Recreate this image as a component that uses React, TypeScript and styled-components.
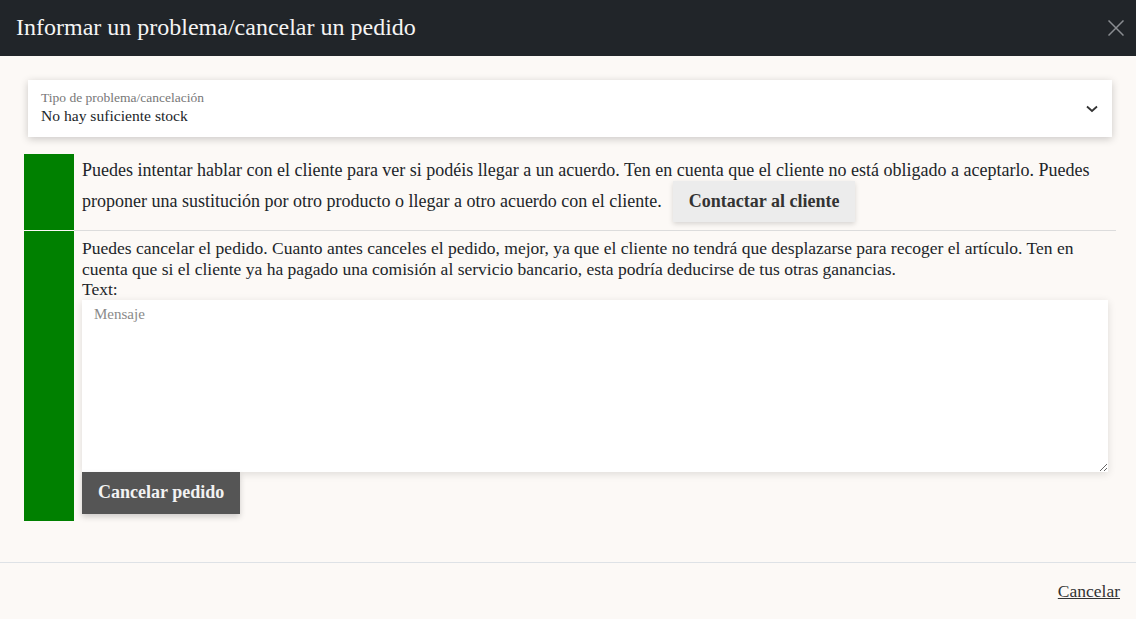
import React from "react";
import styled, { createGlobalStyle } from "styled-components";

const Global = createGlobalStyle`
  html, body { margin: 0; padding: 0; }
  body {
    font-family: "Liberation Serif", "DejaVu Serif", serif;
    background: #fcf9f6;
    color: #212529;
    width: 1136px;
    height: 619px;
    overflow: hidden;
  }
  * { box-sizing: border-box; }
`;

const Modal = styled.div`
  display: flex;
  flex-direction: column;
  height: 619px;
  background: #fcf9f6;
`;

const Header = styled.header`
  height: 56px;
  flex: none;
  background: #212529;
  display: flex;
  align-items: center;
  justify-content: space-between;
  padding: 0 8px 0 16px;
`;

const Title = styled.h1`
  margin: 0;
  font-size: 24px;
  font-weight: 400;
  color: #f4f4f4;
  line-height: 1;
  padding-bottom: 2px;
`;

const CloseButton = styled.button`
  border: 0;
  background: transparent;
  padding: 0;
  width: 24px;
  height: 24px;
  display: flex;
  align-items: center;
  justify-content: center;
  cursor: pointer;
`;

const Body = styled.main`
  flex: 1;
  padding: 24px 20px 0 24px;
`;

const SelectCard = styled.div`
  margin: 0 4px;
  height: 57px;
  background: #fff;
  box-shadow: 0 2px 8px rgba(0, 0, 0, 0.2);
  display: flex;
  align-items: center;
  justify-content: space-between;
  padding: 0 14px 0 13px;
`;

const SelectText = styled.div`
  display: flex;
  flex-direction: column;
  padding-bottom: 2px;
`;

const SelectLabel = styled.span`
  font-size: 13.5px;
  color: #777;
  line-height: 17px;
`;

const SelectValue = styled.span`
  font-size: 15.6px;
  color: #212529;
  line-height: 20px;
`;

const Options = styled.div`
  margin-top: 17px;
  display: flex;
  flex-direction: column;
`;

const OptionRow = styled.div`
  display: flex;
`;

const GreenBar = styled.div<{ $gap?: boolean }>`
  width: 50px;
  flex: none;
  background: #008000;
  margin-bottom: ${(p) => (p.$gap ? "1px" : "0")};
`;

const OptionContent = styled.div<{ $divider?: boolean; $pt: number; $pb: number; $fs: number }>`
  flex: 1;
  padding: ${(p) => p.$pt}px 8px ${(p) => p.$pb}px 8px;
  border-bottom: ${(p) => (p.$divider ? "1px solid #dcdcdc" : "none")};
  font-size: ${(p) => p.$fs}px;
`;

const Paragraph = styled.p<{ $lh: number }>`
  margin: 0;
  line-height: ${(p) => p.$lh}px;
`;

const ContactButton = styled.button`
  display: inline-block;
  vertical-align: baseline;
  margin: -4px 0 0 11px;
  height: 41px;
  padding: 0 16px;
  border: 0;
  background: #ececec;
  box-shadow: 0 2px 5px rgba(0, 0, 0, 0.15);
  font-family: inherit;
  font-weight: 700;
  font-size: 18px;
  color: #333;
`;

const Label = styled.div`
  line-height: 20.5px;
`;

const MessageArea = styled.textarea`
  display: block;
  width: 100%;
  height: 172px;
  border: 0;
  background: #fff;
  box-shadow: 0 2px 8px rgba(0, 0, 0, 0.12);
  padding: 6px 12px;
  font-family: inherit;
  font-size: 15px;
  color: #212529;
  resize: vertical;
  outline: none;
  &::placeholder { color: #8a8a8a; }
`;

const CancelOrderButton = styled.button`
  display: block;
  height: 42px;
  padding: 0 16px;
  border: 0;
  background: #555;
  color: #f2f2f2;
  font-family: inherit;
  font-weight: 700;
  font-size: 18px;
  box-shadow: 0 3px 6px rgba(0, 0, 0, 0.18);
  margin-bottom: 7px;
`;

const Footer = styled.footer`
  height: 57px;
  flex: none;
  border-top: 1px solid #dee2e6;
  display: flex;
  align-items: center;
  justify-content: flex-end;
  padding: 0 16px 0 0;
`;

const CancelLink = styled.a`
  font-size: 17.5px;
  color: #333;
  text-decoration: underline;
  cursor: pointer;
`;

export default function App() {
  return (
    <>
      <Global />
      <Modal>
        <Header>
          <Title>Informar un problema/cancelar un pedido</Title>
          <CloseButton aria-label="Cerrar">
            <svg width="16" height="16" viewBox="0 0 16 16">
              <path d="M0.5 0.5 L15.5 15.5 M15.5 0.5 L0.5 15.5" stroke="#8a8d91" strokeWidth="1.5" />
            </svg>
          </CloseButton>
        </Header>
        <Body>
          <SelectCard>
            <SelectText>
              <SelectLabel>Tipo de problema/cancelación</SelectLabel>
              <SelectValue>No hay suficiente stock</SelectValue>
            </SelectText>
            <svg width="12" height="8" viewBox="0 0 12 8">
              <path d="M1 1.5 L6 6 L11 1.5" fill="none" stroke="#333" strokeWidth="1.8" />
            </svg>
          </SelectCard>
          <Options>
            <OptionRow>
              <GreenBar $gap />
              <OptionContent $divider $pt={2} $pb={8} $fs={18}>
                <Paragraph $lh={29}>
                  Puedes intentar hablar con el cliente para ver si podéis llegar a un acuerdo. Ten en cuenta que el cliente no está obligado a aceptarlo. Puedes proponer una sustitución por otro producto o llegar a otro acuerdo con el cliente.
                  <ContactButton>Contactar al cliente</ContactButton>
                </Paragraph>
              </OptionContent>
            </OptionRow>
            <OptionRow>
              <GreenBar />
              <OptionContent $pt={7} $pb={0} $fs={17.5}>
                <Paragraph $lh={20.5}>
                  Puedes cancelar el pedido. Cuanto antes canceles el pedido, mejor, ya que el cliente no tendrá que desplazarse para recoger el artículo. Ten en cuenta que si el cliente ya ha pagado una comisión al servicio bancario, esta podría deducirse de tus otras ganancias.
                </Paragraph>
                <Label>Text:</Label>
                <MessageArea placeholder="Mensaje" />
                <CancelOrderButton>Cancelar pedido</CancelOrderButton>
              </OptionContent>
            </OptionRow>
          </Options>
        </Body>
        <Footer>
          <CancelLink>Cancelar</CancelLink>
        </Footer>
      </Modal>
    </>
  );
}
